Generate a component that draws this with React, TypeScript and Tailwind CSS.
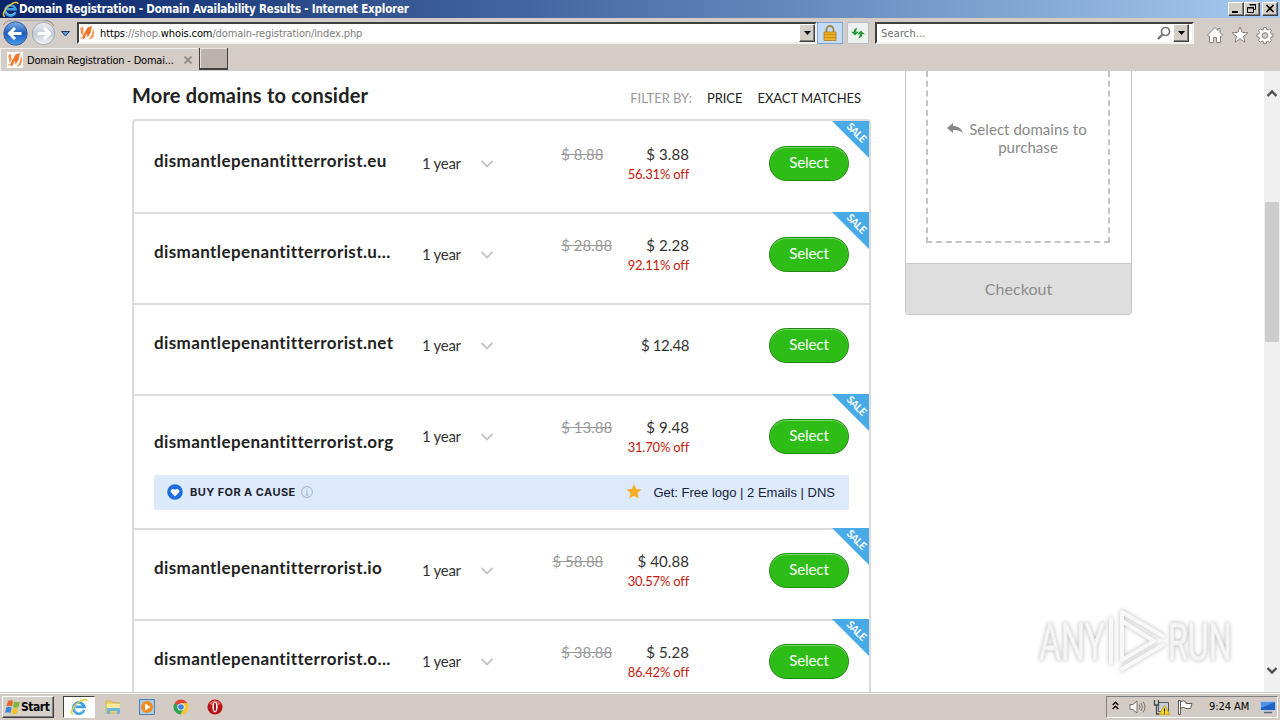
import { clsx } from 'clsx'

type Domain = {
  name: string
  price: string
  oldPrice?: string
  discount?: string
  cause?: boolean
}

const domains: Domain[] = [
  { name: 'dismantlepenantitterrorist.eu', oldPrice: '$ 8.88', price: '$ 3.88', discount: '56.31% off' },
  { name: 'dismantlepenantitterrorist.u...', oldPrice: '$ 28.88', price: '$ 2.28', discount: '92.11% off' },
  { name: 'dismantlepenantitterrorist.net', price: '$ 12.48' },
  { name: 'dismantlepenantitterrorist.org', oldPrice: '$ 13.88', price: '$ 9.48', discount: '31.70% off', cause: true },
  { name: 'dismantlepenantitterrorist.io', oldPrice: '$ 58.88', price: '$ 40.88', discount: '30.57% off' },
  { name: 'dismantlepenantitterrorist.o...', oldPrice: '$ 38.88', price: '$ 5.28', discount: '86.42% off' },
]

const raised = 'border border-t-white border-l-white border-r-[#404040] border-b-[#404040] bg-[#d4d0c8] shadow-[inset_-1px_-1px_0_#808080]'

function IeLogo({ className }: { className: string }) {
  return (
    <svg viewBox="0 0 20 20" className={className} fill="none">
      <path d="M15.8 13.2A6.2 6.2 0 1 1 16 9.8H6" stroke="#3d9fe6" strokeWidth="3" />
      <path d="M15.2 13.4A6 6 0 0 1 5 13" stroke="#8fd2f8" strokeWidth="1" />
      <path d="M3.2 18.2C-.5 17 3 9.500 9 5c4.500-3.400 9.600-4.600 9.800-1.400" stroke="#f0d02c" strokeWidth="1.700" />
    </svg>
  )
}

function WhoisIcon() {
  return (
    <svg viewBox="0 0 16 16" className="w-4 h-4 shrink-0">
      <rect width="16" height="16" fill="#fff" />
      <path d="M1 3.500 4 1.500 4.800 8 2.800 11Z" fill="#f4975a" />
      <path d="M3 12.500 8.500 2.500 13 1 11.500 8 8.500 12.500 7.800 8.500 5 14.500Z" fill="#f0742a" />
      <path d="M9.500 14.500C12.500 12 13.500 8 14 3.500q2 3.500.8 7.500-1.500 3.500-5.300 3.500Z" fill="#f4975a" />
      <path d="M1 12.500 2 11.500l1.500 3Z" fill="#f4975a" />
    </svg>
  )
}

function DropButton() {
  return (
    <div className={clsx(raised, 'w-4 h-[18px] flex items-center justify-center')}>
      <svg viewBox="0 0 7 4" className="w-[7px] h-1"><path d="M0 0h7L3.500 4Z" fill="#000" /></svg>
    </div>
  )
}

function TitleBar() {
  return (
    <div className="h-[18px] flex items-center bg-linear-to-r from-[#0a246a] to-[#a6caf0] pl-[2px] pr-[2px]">
      <IeLogo className="w-[17px] h-[17px] shrink-0" />
      <span className="flex-1 whitespace-nowrap text-white font-bold text-[11.500px] leading-[18px] tracking-[-0.195px] font-['DejaVu_Sans_Condensed','DejaVu_Sans',sans-serif]">
        Domain Registration - Domain Availability Results - Internet Explorer
      </span>
      <div className="flex">
        <div className={clsx(raised, 'w-4 h-[14px]')}>
          <svg viewBox="0 0 14 12" className="w-[14px] h-3"><path d="M3 8h6v2H3Z" /></svg>
        </div>
        <div className={clsx(raised, 'w-4 h-[14px]')}>
          <svg viewBox="0 0 14 12" className="w-[14px] h-3" fill="none" stroke="#000">
            <path d="M5 2h6M4.500 1.500h6v5h-2M2.500 4.500h6v5h-6ZM2 5h7" />
          </svg>
        </div>
        <div className={clsx(raised, 'w-4 h-[14px] ml-[2px]')}>
          <svg viewBox="0 0 14 12" className="w-[14px] h-3" fill="none" stroke="#000" strokeWidth="1.600">
            <path d="m3.500 2 7 7m0-7-7 7" />
          </svg>
        </div>
      </div>
    </div>
  )
}

function AddressBar() {
  return (
    <div className="h-[30px] flex items-start pt-[4px]">
      <svg viewBox="0 0 77 30" className="w-[77px] h-[30px] -mt-[2px] shrink-0">
        <defs>
          <linearGradient id="back" x2="0" y2="1">
            <stop stopColor="#7fb0ea" />
            <stop offset=".5" stopColor="#1d5bbd" />
            <stop offset="1" stopColor="#49a0ee" />
          </linearGradient>
          <linearGradient id="forward" x2="0" y2="1">
            <stop stopColor="#eef1f4" />
            <stop offset=".5" stopColor="#c2cad3" />
            <stop offset="1" stopColor="#f4f7fa" />
          </linearGradient>
        </defs>
        <path d="M3 5Q8-1 16 0H42q9 0 12 6" fill="none" stroke="#8e8b86" strokeWidth="1" />
        <circle cx="15.500" cy="13.500" r="11.700" fill="url(#back)" stroke="#3f5f94" />
        <path d="M9.500 13.500h12M15 8l-5.500 5.500L15 19" fill="none" stroke="#fff" strokeWidth="3" />
        <circle cx="43.500" cy="13.500" r="11.200" fill="url(#forward)" stroke="#a2a7ae" />
        <path d="M37.500 13.500h12M44 8l5.500 5.500L44 19" fill="none" stroke="#fff" strokeWidth="3" />
        <path d="M61.500 11.500h8l-4 4.500Z" fill="#5b9bd5" stroke="#1f3f66" />
      </svg>
      <div className="w-[740px] h-[22px] flex items-center bg-white border-2 border-t-[#404040] border-l-[#404040] border-r-[#f4f2ee] border-b-[#f4f2ee]">
        <WhoisIcon />
        <div className="flex-1 pl-[5px] pt-[2px] text-[11px] leading-[18px] tracking-[-0.120px] text-[#7c7c7c] font-['DejaVu_Sans_Condensed','DejaVu_Sans',sans-serif]">
          <span className="text-black">https</span>://shop.<span className="text-black">whois.com</span>/domain-registration/index.php
        </div>
        <DropButton />
      </div>
      <div className="w-[26px] h-[22px] flex items-center justify-center bg-[#c5dcf7] border border-[#7da7dc]">
        <svg viewBox="0 0 14 16" className="w-[14px] h-4">
          <path d="M3.500 7V4.500a3.500 3.500 0 0 1 7 0V7" fill="none" stroke="#a08840" strokeWidth="1.800" />
          <path d="M1 7h12v8.500H1Z" fill="#edb22a" stroke="#a97a10" strokeWidth=".8" />
          <path d="M1 9.500h12M1 12.500h12" stroke="#c58d14" />
        </svg>
      </div>
      <div className="ml-1 w-[22px] h-[22px] flex items-center justify-center bg-[#edf1f0] border border-[#b6bdc4] rounded-xs">
        <svg viewBox="0 0 16 14" className="w-[14px] h-3" fill="#279a3a">
          <path d="M4.500 10 0 5.500h3Q3 1.500 7.500 1 5.800 2.500 6 5.500h3Z" />
          <path d="M11.500 4 16 8.500h-3q0 4-4.500 4.500 1.700-1.500 1.500-4.500H7Z" />
        </svg>
      </div>
      <div className="ml-[6px] w-[319px] h-[22px] flex items-center bg-white border-2 border-t-[#404040] border-l-[#404040] border-r-[#f4f2ee] border-b-[#f4f2ee] pl-[4px] pr-[3px]">
        <span className="flex-1 pt-[2px] text-[11px] leading-[18px] tracking-[0.150px] text-[#6d6d6d] font-['DejaVu_Sans_Condensed','DejaVu_Sans',sans-serif]">Search...</span>
        <svg viewBox="0 0 14 14" className="w-[14px] h-[14px] mr-[2px]" fill="none" stroke="#777" strokeWidth="1.700">
          <circle cx="8.500" cy="5.500" r="4" />
          <path d="M5.500 8.500 1 13" strokeWidth="2.400" />
        </svg>
        <DropButton />
      </div>
      <div className="ml-3 mt-1 flex gap-[7px]">
        <svg viewBox="0 0 18 18" className="w-[18px] h-[18px]" fill="#fff" stroke="#85827d">
          <path d="M9 1.500 1.500 9 3 10.500l.500-.5v6.500h4v-5h3v5h4V10l.500.500L16.500 9 14 6.500v-4h-2v2Z" />
        </svg>
        <svg viewBox="0 0 18 18" className="w-[18px] h-[18px]" fill="#fff" stroke="#85827d">
          <path d="m9 1 2.200 5.400 5.800.4-4.500 3.700L14 16.200 9 13l-5 3.200 1.500-5.700L1 6.800l5.800-.4Z" />
        </svg>
        <svg viewBox="0 0 18 18" className="w-[18px] h-[18px]" fill="#fff" stroke="#85827d">
          <path d="M7.700 1.500h2.600l.4 2 1.300.600 1.800-1.200 1.800 1.800-1.200 1.800.6 1.400 2 .4v2.500l-2 .4-.6 1.400 1.200 1.800-1.800 1.800-1.800-1.200-1.300.6-.4 2H7.700l-.4-2L6 15l-1.800 1.200-1.800-1.800 1.200-1.800-.6-1.400-2-.4V8.300l2-.4.6-1.400-1.200-1.800 1.800-1.800L6 4.100l1.300-.6Z" />
          <circle cx="9" cy="9.500" r="2.800" fill="#d4ccc6" />
        </svg>
      </div>
    </div>
  )
}

function TabStrip() {
  return (
    <div className="h-[23px] flex">
      <div className="w-[198px] h-[23px] flex items-center border-t border-l border-white/70 pl-[6px]">
        <WhoisIcon />
        <span className="ml-1 w-[157px] pt-px whitespace-nowrap text-[11px] leading-[22px] tracking-[-0.200px] text-black font-['DejaVu_Sans_Condensed','DejaVu_Sans',sans-serif]">
          Domain Registration - Domai...
        </span>
        <svg viewBox="0 0 8 8" className="w-2 h-2 shrink-0" stroke="#8b8783" strokeWidth="1.800"><path d="m.5.5 7 7m0-7-7 7" /></svg>
      </div>
      <div className="ml-px w-[29px] h-[22px] bg-[#bab2ac] border-l border-b-2 border-r border-[#404040] shadow-[inset_1px_1px_0_#e8e4e0]" />
    </div>
  )
}

function SaleRibbon() {
  return (
    <svg viewBox="0 0 37 37" className="w-[37px] h-[37px]">
      <path d="M0 0h37v37Z" fill="#49aae8" />
      <text x="24.500" y="15.500" transform="rotate(45 24.500 12)" textAnchor="middle" textLength="23" className="fill-white font-['Lato',sans-serif] font-bold text-[10.500px]">SALE</text>
    </svg>
  )
}

function CauseBar() {
  return (
    <div className="mt-[18px] h-[35px] flex items-center rounded-xs bg-[#dceafc] pl-[13px] pr-[14px]">
      <svg viewBox="0 0 16 16" className="w-4 h-4 -mt-px">
        <circle cx="8" cy="8" r="7.800" fill="#1f6fe0" />
        <path d="M8 12.500 4 8.300C2.700 6 5.800 3.500 8 5.800c2.200-2.300 5.300.2 4 2.500Z" fill="#fff" />
      </svg>
      <span className="ml-[7px] w-[105px] whitespace-nowrap text-[11px] font-bold text-[#1c2330] tracking-[0.420px] font-['Inter','Lato',sans-serif]">BUY FOR A CAUSE</span>
      <svg viewBox="0 0 12 12" className="ml-[6px] w-3 h-3 -mt-px" fill="none" stroke="#93a5bd" strokeWidth=".8">
        <circle cx="6" cy="6" r="5.400" />
        <path d="M5 5h1v4M4.800 9h2.400M5.500 3h1" />
      </svg>
      <svg viewBox="0 0 16 16" className="ml-auto w-4 h-4 -mt-px">
        <path d="m8 0 2.200 5 5.300.500-4 3.600 1.200 5.400L8 11.700 3.300 14.500l1.200-5.400L.5 5.500l5.300-.5Z" fill="#fbab26" />
      </svg>
      <span className="ml-[11px] text-[13px] text-[#16213a] font-['Liberation_Sans',Arial,sans-serif]">Get: Free logo | 2 Emails | DNS</span>
    </div>
  )
}

function DomainRow({ domain, first }: { domain: Domain; first: boolean }) {
  const { name, price, oldPrice, discount, cause } = domain
  return (
    <div className={clsx('relative px-5', cause ? 'h-[134px]' : 'h-[91px]', !first && 'border-t-2 border-[#dcdcdc]')}>
      {discount && <div className={clsx('absolute right-0 w-[37px] h-[37px]', first ? 'top-0' : '-top-[2px]')}><SaleRibbon /></div>}
      <div className={clsx('flex items-start', first ? 'pt-[25px]' : 'pt-[23px]')}>
        <div className={clsx('w-[268px] whitespace-nowrap font-bold text-[17px] leading-[30px] tracking-[0.390px] text-[#222]', cause && 'pt-2')}>{name}</div>
        <div className="w-[59px] text-[15px] leading-[32px] pt-px tracking-[-0.300px] text-[#333]">1 year</div>
        <svg viewBox="0 0 12 8" className="w-3 h-2 mt-[14px]" fill="none" stroke="#c4c4c4" strokeWidth="1.800"><path d="m.5 1 5.500 5.500L11.500 1" /></svg>
        <div className={clsx('flex-1 flex justify-end pr-[80px]', !discount && 'pt-[9px]')}>
          {oldPrice && <div className="text-[15px] leading-4 text-[#999] w-[85px]"><span className="line-through">{oldPrice}</span></div>}
          <div className={clsx('relative text-[15px] leading-4 text-[#333] whitespace-nowrap', discount ? 'tracking-[0.100px]' : 'tracking-[-0.400px]')}>
            {price}
            {discount && <div className="absolute right-0 top-[20px] text-[13px] leading-4 tracking-[-0.200px] text-[#c41a10]">{discount}</div>}
          </div>
        </div>
        <button className="w-20 h-[35px] rounded-full bg-[#2ebd17] border border-[#208a10] text-white text-[15px] leading-[31px] pb-[2px] tracking-[-0.080px] shadow-[inset_0_1px_0_#7ad96b]">Select</button>
      </div>
      {cause && <CauseBar />}
    </div>
  )
}

function Cart() {
  return (
    <div className="ml-[34px] w-[227px] h-[244px] flex flex-col border border-t-0 border-[#c6c6c6] rounded-b-sm">
      <div className="h-[192px] pl-5 pr-[21px]">
        <div className="h-[172px] border-2 border-t-0 border-dashed border-[#c4c4c4] pt-[49px] flex justify-center text-[15px] leading-[18px] text-[#888]">
          <svg viewBox="0 0 16 12" className="w-4 h-3 mt-[3px] mr-[6px] -ml-[2px]" fill="#888">
            <path d="M0 5 6 0v3c5 0 8 2 10 7-3-2.500-6-3-10-3v3Z" />
          </svg>
          <div className="text-center tracking-[0.050px]">Select domains to<br />purchase</div>
        </div>
      </div>
      <div className="flex-1 border-t border-[#c6c6c6] bg-[#dedede] rounded-b-sm text-center text-[16px] leading-[49px] tracking-[0.080px] text-[#8c8c8c]">Checkout</div>
    </div>
  )
}

function ScrollBar() {
  return (
    <div className="ml-auto w-4 bg-[#f0f0f0] flex flex-col items-center">
      <svg viewBox="0 0 12 8" className="w-3 h-2 mt-[18px]" fill="none" stroke="#505050" strokeWidth="2.400"><path d="M1.500 7 6 2.500 10.500 7" /></svg>
      <div className="mt-[105px] w-[14px] h-[140px] bg-[#cdcdcd]" />
      <svg viewBox="0 0 12 8" className="w-3 h-2 mt-auto mb-[17px]" fill="none" stroke="#505050" strokeWidth="2.400"><path d="M1.500 1 6 5.500 10.500 1" /></svg>
    </div>
  )
}

function Watermark() {
  return (
    <svg viewBox="0 0 210 70" className="absolute left-[1031px] top-[606px] w-[210px] h-[70px] drop-shadow-[0_0_2px_#b8b8b8]">
      <g className="font-['Roboto',sans-serif] text-[52px] font-normal" fill="#f6f6f6" stroke="#f0f0f0" strokeWidth="1">
        <text x="0" y="0" transform="translate(8 54) scale(.65 1)">ANY</text>
        <text x="0" y="0" transform="translate(137 54) scale(.62 1)">RUN</text>
      </g>
      <g fill="none" stroke="#f8f8f8" strokeWidth="4" strokeLinejoin="round" strokeLinecap="round">
        <path d="M91 46V6l41 24M80 13v44" />
        <path d="M91 15v39l32-19M91 15l32 20M91 63l41-24" />
      </g>
    </svg>
  )
}

function Taskbar() {
  return (
    <div className="h-7 flex items-start pt-[3px] bg-[#d4ccc4] border-t border-[#d4ccc4] shadow-[inset_0_1px_0_#fff] pl-[2px] pr-[2px] font-['DejaVu_Sans_Condensed','DejaVu_Sans',sans-serif]">
      <div className={clsx(raised, 'w-[52px] h-[22px] flex items-center pl-[2px]')}>
        <svg viewBox="0 0 16 16" className="w-4 h-4 shrink-0">
          <path d="M3 2q2.500-1.500 5 0L7 7.500q-2.500-1.500-5.500 0Z" fill="#e8652b" />
          <path d="M9 2.500q3 1.500 6 0L13.500 8q-3 1.500-5.500 0Z" fill="#7db83a" />
          <path d="M1.300 8.500q2.500-1.500 5.300 0L5.500 14q-2.500-1.500-5.300 0Z" fill="#3b87d6" />
          <path d="M7.700 9q3 1.500 5.500 0L12 14.500q-3 1.500-5.500 0Z" fill="#f2bf2b" />
        </svg>
        <span className="text-[12px] font-bold tracking-[-0.450px] text-black">Start</span>
      </div>
      <div className="ml-[9px] w-8 h-[22px] flex items-center justify-center bg-white border border-t-[#404040] border-l-[#404040] border-r-white border-b-white">
        <IeLogo className="w-[18px] h-[18px]" />
      </div>
      <svg viewBox="0 0 16 16" className="ml-[10px] mt-[3px] w-4 h-4">
        <path d="M1 2h5l1 1.500h7V14H1Z" fill="#edd06c" stroke="#c9a84a" strokeWidth=".6" />
        <path d="M2 5h13v4H2Z" fill="#f8e7a0" />
        <path d="M2 9h13v6h-3v-3H5v3H2Z" fill="#69b5dc" />
      </svg>
      <svg viewBox="0 0 16 16" className="ml-[18px] mt-[3px] w-4 h-4">
        <path d="M.5.5h15v15H.5Z" fill="#a9cdec" stroke="#4d7fb4" />
        <circle cx="8" cy="8" r="6" fill="#f48a1c" />
        <path d="m6 4.500 5.500 3.500L6 11.500Z" fill="#fff" />
      </svg>
      <svg viewBox="0 0 16 16" className="ml-[18px] mt-[3px] w-4 h-4">
        <path d="M8 8 1.500 4.200A7.500 7.500 0 0 1 14.500 4.300H8Z" fill="#e04438" />
        <path d="M8 8 1.500 4.200A7.500 7.500 0 0 0 7.500 15.500L11 9.700Z" fill="#2fa452" />
        <path d="M8 4.300h6.500A7.500 7.500 0 0 1 7.500 15.500L11 9.700Z" fill="#f6c82d" />
        <circle cx="8" cy="8" r="3.600" fill="#fff" />
        <circle cx="8" cy="8" r="2.800" fill="#3f80e0" />
      </svg>
      <svg viewBox="0 0 16 16" className="ml-[18px] mt-[3px] w-4 h-4">
        <circle cx="8" cy="8" r="7.600" fill="#b81319" />
        <path d="M2 5a7 7 0 0 1 12 0Q8 8 2 5Z" fill="#e4585a" />
        <ellipse cx="8" cy="8" rx="2.600" ry="5.400" fill="#fff" />
        <ellipse cx="8" cy="8" rx="1.100" ry="4.400" fill="#a60d12" />
      </svg>

      <div className="ml-auto w-[172px] h-[22px] flex items-center border border-t-[#808080] border-l-[#808080] border-r-white border-b-white pl-[5px] text-black">
        <svg viewBox="0 0 7 9" className="w-[7px] h-[9px] -mt-[3px]" fill="none" stroke="#000" strokeWidth="1.300"><path d="m.7 4 2.800-2.800L6.300 4M.7 8l2.800-2.800L6.300 8" /></svg>
        <svg viewBox="0 0 17 16" className="ml-[10px] w-[17px] h-4" fill="#fff" stroke="#77736e">
          <path d="M1 5.500h3L8 2v12l-4-3.500H1Z" />
          <path d="M10 5.500q2 2.500 0 5M12 4q3 4 0 8M14 2.500q4 5.500 0 11" fill="none" />
        </svg>
        <svg viewBox="0 0 17 16" className="ml-[7px] w-[17px] h-4">
          <path d="M5.500 3.500h10v9h-10Z" fill="#c8ced6" stroke="#55585c" />
          <path d="M1.500 1v5h4V1M3.500 6v9h3" fill="none" stroke="#44474b" strokeWidth="1.300" />
          <path d="M11.500 6.500 17 15.500H6Z" fill="#f6cf25" stroke="#b58d0c" strokeWidth=".6" />
          <path d="M11.500 9.500v3M11.500 13.500v1" stroke="#000" />
        </svg>
        <svg viewBox="0 0 17 16" className="ml-[7px] w-[17px] h-4" fill="#fff" stroke="#5e5b57">
          <path d="M1.500 1.500h2v14h-2ZM3.500 2.500q3-1.500 5.500.5v1.500h6l-1.500 5H9q-2-2-5.500-.5Z" />
        </svg>
        <span className="ml-[15px] w-[43px] pt-px whitespace-nowrap text-[11px] tracking-[-0.050px]">9:24 AM</span>
        <svg viewBox="0 0 16 14" className="ml-2 w-4 h-[14px]">
          <path d="M.5 1.500h15v9H.5Z" fill="#1f62c4" stroke="#d8e6f5" strokeWidth=".6" />
          <path d="M1 2h14L1 8Z" fill="#4f93e4" />
          <path d="M4 12.500h8" stroke="#54677c" strokeWidth="1.500" />
        </svg>
      </div>
    </div>
  )
}

export default function App() {
  return (
    <div className="relative w-[1280px] h-[720px] flex flex-col overflow-hidden bg-[#d4ccc6]">
      <TitleBar />
      <AddressBar />
      <TabStrip />
      <main className="h-[621px] flex items-stretch overflow-hidden bg-white font-['Lato',sans-serif] [font-variant-ligatures:none] pl-[132px]">
        <section className="w-[739px] shrink-0">
          <div className="h-12 flex items-start pt-[11px] pr-[10px]">
            <h1 className="flex-1 text-[20px] leading-[26px] font-bold tracking-[0.180px] text-[#222]">More domains to consider</h1>
            <div className="flex text-[13px] leading-[32px] tracking-[-0.050px] whitespace-nowrap text-[#222]">
              <span className="text-[#999] mr-[15px]">FILTER BY:</span>
              <span className="mr-[15px]">PRICE</span>
              <span>EXACT MATCHES</span>
            </div>
          </div>
          <div className="border-2 border-[#dcdcdc] rounded-t-sm">
            {domains.map((d, i) => <DomainRow key={d.name} domain={d} first={i === 0} />)}
          </div>
        </section>
        <Cart />
        <ScrollBar />
      </main>
      <Taskbar />
      <Watermark />
    </div>
  )
}
